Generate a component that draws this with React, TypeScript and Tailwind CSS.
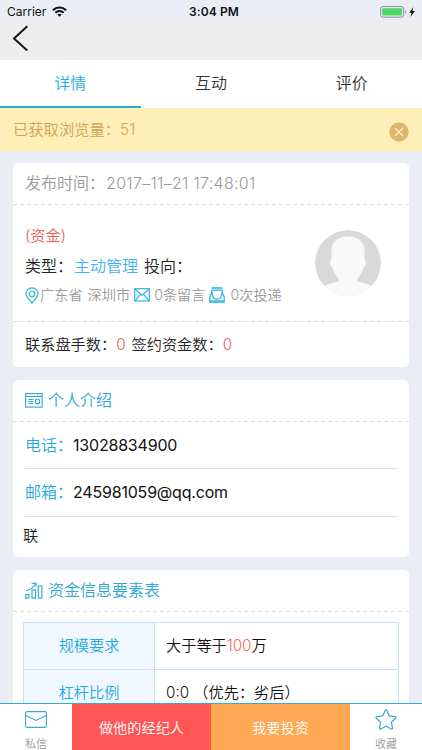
import type { ReactNode } from "react";
import clsx from "clsx";

const tabs = ["详情", "互动", "评价"];

const rows = [
  {
    label: "规模要求",
    value: (
      <>
        大于等于<span className="text-[#ee6a6a]">100</span>万
      </>
    ),
  },
  { label: "杠杆比例", value: "0:0 （优先：劣后）" },
];

function WifiIcon() {
  return (
    <svg viewBox="0 0 15 11" className="h-[11px] w-[15px]" fill="none" stroke="#111" strokeWidth="2.2">
      <path d="M0.9 4.2C4.7.6 10.3.6 14.1 4.2" />
      <path d="M3.4 6.8c2.4-2.2 5.8-2.2 8.2 0" />
      <path d="M7.5 10.8 5.3 8.6c1.3-1.1 3.1-1.1 4.4 0z" fill="#111" stroke="none" />
    </svg>
  );
}

function BatteryIcon() {
  return (
    <svg viewBox="0 0 37 12" className="h-3 w-[37px]">
      <rect x="0.6" y="0.6" width="23" height="10.6" rx="2.4" fill="none" stroke="#8e9094" />
      <rect x="2.2" y="2.2" width="19.8" height="7.4" rx="1" fill="#4cd964" />
      <path d="M25 4v4c1.3-.6 1.3-3.4 0-4z" fill="#8e9094" />
      <path d="M33.4.9 29.2 6.8h2.4l-1.2 4.3 4.5-6h-2.6z" fill="#111" />
    </svg>
  );
}

function PinIcon() {
  return (
    <svg viewBox="0 0 14 17" className="h-[17px] w-[14px]" fill="none" stroke="#2fb3e4" strokeWidth="1.2">
      <path d="M7 16C4 12.3 1 9.7 1 6.8a6 6 0 0 1 12 0C13 9.7 10 12.3 7 16z" />
      <circle cx="7" cy="6.8" r="2.8" />
    </svg>
  );
}

function MailIcon() {
  return (
    <svg viewBox="0 0 16 14" className="h-[14px] w-4" fill="none" stroke="#2fb3e4" strokeWidth="1.2">
      <rect x="0.7" y="0.7" width="14.6" height="12.3" />
      <path d="m1 1 7 6.5L15 1M1 12.8l5-6M15 12.8l-5-6" />
    </svg>
  );
}

function InboxIcon() {
  return (
    <svg viewBox="0 0 16 16" className="h-4 w-4" fill="none" stroke="#2fb3e4" strokeWidth="1.3">
      <path d="M2.5 1h11M2.5 3.2h11" />
      <path d="M2.8 3.2v2.600L.8 10v5h14.400v-5l-2-4.200V3.200" />
      <path d="M2.800 5.500 4 9.500c.5 3.600 7.500 3.600 8 0l1.200-4" />
      <path d="M1 14h14" />
    </svg>
  );
}

function ProfileIcon() {
  return (
    <svg viewBox="0 0 18 15" className="h-[15px] w-[18px]" fill="none" stroke="#2ba6d5" strokeWidth="1.1">
      <rect x="0.6" y="0.6" width="16.5" height="13.5" />
      <path d="M.6 3.5h16.5M12 2h1M14.5 2h1M3.5 6.5h5M3.5 8.5h5M3.5 10.5h5" />
      <rect x="10.5" y="6.3" width="4" height="4.3" rx="1" />
    </svg>
  );
}

function ChartIcon() {
  return (
    <svg viewBox="0 0 18 17" className="h-[17px] w-[18px]" fill="none" stroke="#2ba6d5" strokeWidth="1.1">
      <rect x="0.7" y="12.5" width="3.2" height="3.6" />
      <rect x="7" y="8" width="3.5" height="8.1" />
      <rect x="13.3" y="4" width="3.5" height="12.1" />
      <path d="M1 8.5c4-.3 7-2.5 9.5-6.5M6.5 1.7 10.8 1l.5 3.5" />
    </svg>
  );
}

function Avatar() {
  return (
    <svg viewBox="0 0 66 66" className="size-[66px] rounded-full">
      <circle cx="33" cy="33" r="33" fill="#d9d9d9" />
      <path
        d="M33 6.5c-10.500 0-16.500 5.500-16.500 14.500v9c-2.200.8-2 6 1 7.500 1.500 7 6.500 9.500 6.500 13.500-4 1.500-10.500 2.500-15.500 6L8 66h50l-.5-9c-5-3.500-11.500-4.500-15.500-6 0-4 5-6.500 6.500-13.500 3-1.500 3.200-6.700 1-7.500v-9c0-9-6-14.500-16.500-14.500z"
        fill="#f9f9f9"
      />
    </svg>
  );
}

function DashedLine() {
  return (
    <div className="h-px shrink-0 bg-[repeating-linear-gradient(90deg,#dcdcdc_0_4px,transparent_4px_7px)]" />
  );
}

function Card({ className, children }: { className?: string; children: ReactNode }) {
  return <section className={clsx("flex flex-col rounded-[5px] bg-white", className)}>{children}</section>;
}

function CardTitle({ icon, children }: { icon: ReactNode; children: ReactNode }) {
  return (
    <>
      <h2 className="flex h-[41px] items-center gap-[5px] pb-px pl-3 text-base font-[350] text-[#2ba6d5]">
        {icon}
        {children}
      </h2>
      <DashedLine />
    </>
  );
}

export default function App() {
  return (
    <div className="flex h-[750px] w-[422px] flex-col overflow-hidden bg-[#eaedf5] font-['Inter','Noto_Sans_CJK_SC',sans-serif] font-[350] whitespace-nowrap text-[#222]">
      {/* Status bar */}
      <div className="grid h-[23px] shrink-0 grid-cols-3 items-center pr-[5px] pl-[7px] text-[12px] font-normal text-[#111]">
        <div className="flex items-center gap-1.5">
          Carrier
          <WifiIcon />
        </div>
        <div className="pl-1 text-center font-semibold tracking-[0.1px]">3:04 PM</div>
        <div className="flex justify-end">
          <BatteryIcon />
        </div>
      </div>

      {/* Header */}
      <header className="flex h-[37px] shrink-0 items-start bg-[#ededed] pt-0.5 pl-3">
        <button type="button" aria-label="返回">
          <svg viewBox="0 0 17 26" className="h-[26px] w-[17px]" fill="none" stroke="#161616" strokeWidth="2">
            <path d="M15.3 1.2 2 13.5l13.3 12" />
          </svg>
        </button>
      </header>

      {/* Tabs */}
      <nav className="grid h-12 shrink-0 grid-cols-3 bg-white text-base">
        {tabs.map((tab, i) => (
          <button
            key={tab}
            type="button"
            className={clsx(
              "border-b-2",
              i === 0 ? "border-[#27a5d2] text-[#1fb0e6]" : "border-transparent text-[#333]"
            )}
          >
            {tab}
          </button>
        ))}
      </nav>

      {/* Notice */}
      <div className="flex h-[43px] shrink-0 items-center justify-between bg-[#feefb9] px-[13px] text-[#d4a050]">
        <span className="pt-px text-[15.3px]">已获取浏览量：51</span>
        <svg viewBox="0 0 20 20" className="mt-1 size-5">
          <circle cx="10" cy="10" r="9.7" fill="#dfb56c" />
          <path d="m6 6 8 8M14 6l-8 8" stroke="#fff3d0" strokeWidth="1.2" />
        </svg>
      </div>

      <main className="flex min-h-0 flex-1 flex-col gap-[13px] overflow-hidden px-[13px] pt-3">
        <Card className="h-[204px] shrink-0">
          <div className="flex h-[41px] items-center pb-px pl-3 text-base text-[#999]">
            发布时间：<span className="ml-px tracking-[0.3px]">2017–11–21 17:48:01</span>
          </div>
          <DashedLine />
          <div className="flex h-[116px] items-start justify-between pr-7 pl-3">
            <div className="flex flex-col pt-[18px]">
              <div className="h-[26px] text-[15.2px] leading-[26px] text-[#ee5c5c]">(资金)</div>
              <div className="mt-[3px] h-7 text-base leading-7">
                类型：<span className="ml-px text-[#41b4ee]">主动管理</span>
                <span className="ml-1.5">投向：</span>
              </div>
              <div className="mt-[3px] flex h-6 items-center text-[14.2px] text-[#999]">
                <PinIcon />
                <span className="ml-px">广东省</span>
                <span className="ml-[5px]">深圳市</span>
                <span className="ml-1">
                  <MailIcon />
                </span>
                <span className="ml-1">0条留言</span>
                <span className="ml-1">
                  <InboxIcon />
                </span>
                <span className="ml-[5px]">0次投递</span>
              </div>
            </div>
            <div className="pt-[25px]">
              <Avatar />
            </div>
          </div>
          <DashedLine />
          <div className="flex h-[45px] items-center gap-1.5 pt-px pl-3 text-[15.2px]">
            <span>
              联系盘手数：<span className="text-[#ee5c5c]">0</span>
            </span>
            <span>
              签约资金数：<span className="text-[#ee5c5c]">0</span>
            </span>
          </div>
        </Card>

        <Card className="h-[177px] shrink-0">
          <CardTitle icon={<ProfileIcon />}>个人介绍</CardTitle>
          <div className="flex flex-col px-3 text-base">
            <div className="flex h-[47px] items-center border-b border-[#ddd]">
              <span className="text-[#1fa9e1]">电话：</span>
              <span className="font-normal tracking-[-0.2px] text-[#111]">13028834900</span>
            </div>
            <div className="flex h-12 items-center border-b border-[#ddd] pb-px">
              <span className="text-[#1fa9e1]">邮箱：</span>
              <span className="font-normal tracking-[-0.2px] text-[#111]">245981059@qq.com</span>
            </div>
          </div>
          <div className="flex h-10 items-center pb-px pl-2.5 text-[15.2px]">联</div>
        </Card>

        <Card className="h-[240px] shrink-0">
          <CardTitle icon={<ChartIcon />}>资金信息要素表</CardTitle>
          <div className="mx-2.5 mt-2.5 border border-[#c5e1f8] text-[15.2px]">
            {rows.map((row) => (
              <div key={row.label} className="grid h-[47px] grid-cols-[131px_1fr] border-b border-[#c5e1f8]">
                <div className="flex items-center justify-center border-r border-[#c5e1f8] bg-[#f0f7fe] text-[#1fa9e1]">
                  {row.label}
                </div>
                <div className="flex items-center pl-[11px] text-[#111]">
                  <span>{row.value}</span>
                </div>
              </div>
            ))}
          </div>
        </Card>
      </main>

      {/* Bottom bar */}
      <footer className="grid h-[47px] shrink-0 grid-cols-[72px_139px_139px_72px] border-t border-[#36a9d2] bg-white">
        <button type="button" className="flex flex-col items-center pt-[7px] text-[11px] text-[#999]">
          <svg viewBox="0 0 22 17" className="h-[17px] w-[22px]" fill="none" stroke="#36a9d2" strokeWidth="1.1">
            <rect x="0.6" y="0.6" width="20.8" height="15.8" rx="1.5" />
            <path d="m1 4.5 10 5 10-5" />
          </svg>
          <span className="mt-2 leading-4">私信</span>
        </button>
        <button type="button" className="bg-[#ff5655] text-[14.2px] text-white">
          做他的经纪人
        </button>
        <button type="button" className="bg-[#ffa854] text-[14.2px] text-white">
          我要投资
        </button>
        <button type="button" className="flex flex-col items-center pt-[5px] text-[11px] text-[#999]">
          <svg
            viewBox="0 0 22 21"
            className="h-[21px] w-[22px]"
            fill="none"
            stroke="#36a9d2"
            strokeWidth="1.2"
            strokeLinejoin="round"
          >
            <path d="M10.2 1.5q.8-1.2 1.6 0l2.5 5.4 6 .8q1.2.5.4 1.5l-4.3 4 1.1 6q-.2 1.2-1.4.7L11 17l-5.1 2.900q-1.200.5-1.400-.7l1.100-6-4.300-4q-.8-1 .4-1.500l6-.8z" />
          </svg>
          <span className="mt-1.5 leading-4">收藏</span>
        </button>
      </footer>
    </div>
  );
}
